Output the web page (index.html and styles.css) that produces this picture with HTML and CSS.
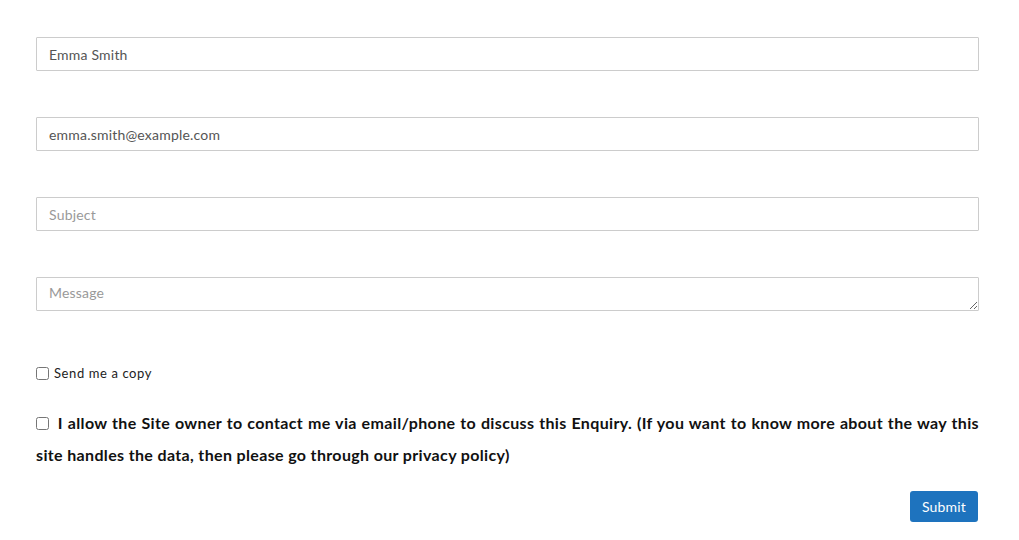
FILE: index.html
```html
<!DOCTYPE html>
<html>
<head>
<meta charset="utf-8">
<link rel="stylesheet" href="styles.css">
</head>
<body>
<form class="form">
  <div class="field"><input class="input" type="text" value="Emma Smith"></div>
  <div class="field"><input class="input" type="email" value="emma.smith@example.com"></div>
  <div class="field"><input class="input" type="text" placeholder="Subject"></div>
  <div class="field"><textarea class="input textarea" placeholder="Message"></textarea></div>
  <label class="copy"><input type="checkbox" class="check"> Send me a copy</label>
  <label class="consent"><input type="checkbox" class="check check-consent"> I allow the Site owner to contact me via email/phone to discuss this Enquiry. (If you want to know more about the way this site handles the data, then please go through our privacy policy)</label>
  <div class="actions"><button type="button" class="submit">Submit</button></div>
</form>
</body>
</html>
```
FILE: styles.css
```css
html, body {
  margin: 0;
  padding: 0;
  background: #fff;
}
body {
  font-family: Lato, "Open Sans", "Liberation Sans", sans-serif;
  color: #111;
}
.form {
  width: 943px;
  padding: 37px 40px 0 36px;
  display: flex;
  flex-direction: column;
}
.field {
  margin-bottom: 46px;
}
.input {
  display: block;
  box-sizing: border-box;
  width: 100%;
  height: 34px;
  margin: 0;
  padding: 0 12px;
  border: 1px solid #cccccc;
  border-radius: 1px;
  font-family: inherit;
  font-size: 14px;
  letter-spacing: 0.2px;
  color: #555;
  background: #fff;
  outline: none;
}
.input::placeholder {
  color: #999;
}
.textarea {
  padding-top: 7px;
  resize: vertical;
  line-height: 16px;
}
.copy {
  display: flex;
  align-items: center;
  font-size: 13px;
  letter-spacing: 0.6px;
  color: #222;
  margin-top: 6px;
  height: 20px;
}
.check {
  width: 13px;
  height: 13px;
  margin: 0 5px 0 0;
}
.consent {
  display: block;
  margin-top: 24px;
  font-size: 16px;
  font-weight: 700;
  letter-spacing: 0.35px;
  line-height: 32px;
  text-align: justify;
  color: #111;
}
.check-consent {
  margin: 0 4px 0 0;
  vertical-align: -1px;
}
.actions {
  display: flex;
  justify-content: flex-end;
  margin-top: 20px;
  padding-right: 1px;
}
.submit {
  width: 68px;
  height: 31px;
  border: none;
  border-radius: 3px;
  background: #1e73be;
  color: #fff;
  font-family: inherit;
  font-size: 14px;
  letter-spacing: 0.2px;
  padding: 0;
}
```
